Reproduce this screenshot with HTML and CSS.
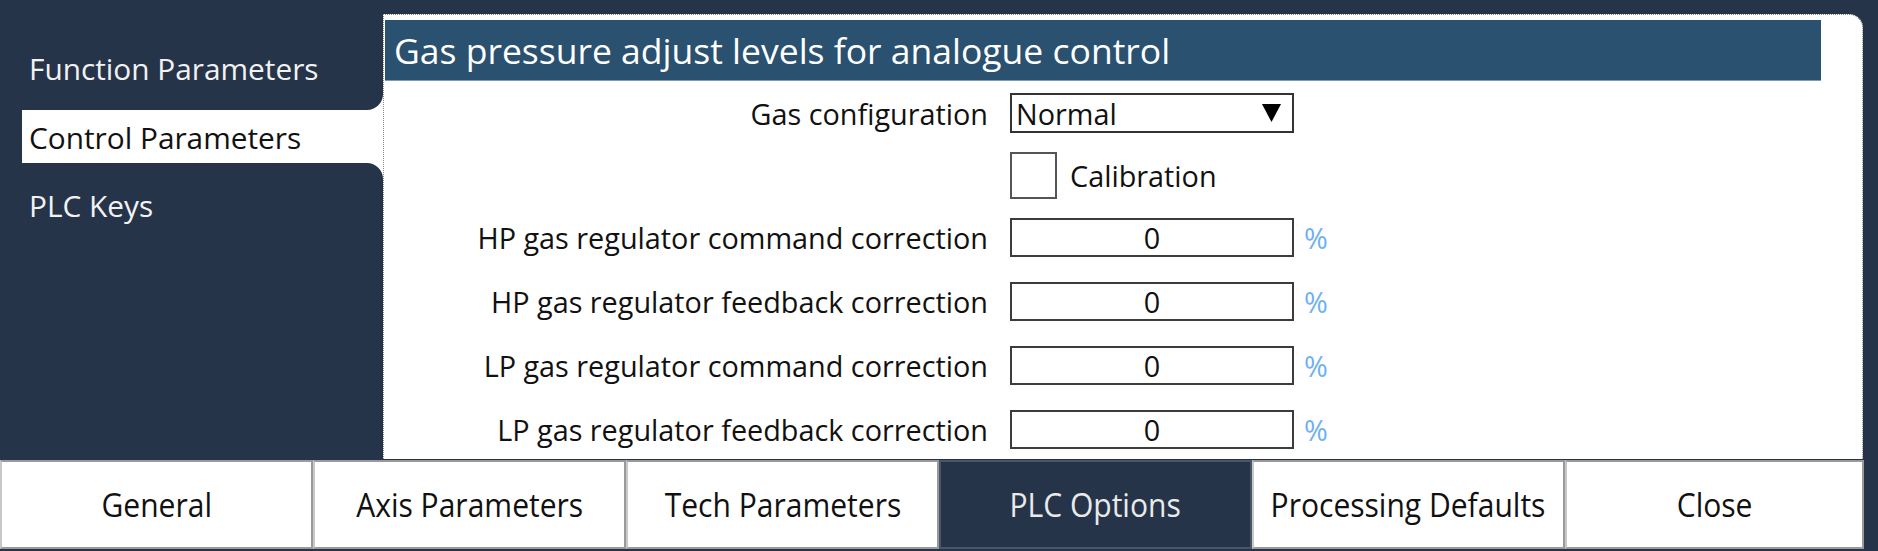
FILE: index.html
```html
<!DOCTYPE html>
<html lang="en">
<head>
<meta charset="utf-8">
<title>PLC Options</title>
<link rel="stylesheet" href="styles.css">
</head>
<body>
<div class="app">
  <div class="top">
    <nav class="side">
      <div class="slot"><div class="tab tab-first">Function Parameters</div></div>
      <div class="tab tab-active">Control Parameters</div>
      <div class="slot slot-fill"><div class="tab tab-last">PLC Keys</div></div>
    </nav>
    <section class="panel">
      <h1 class="panel-title">Gas pressure adjust levels for analogue control</h1>
      <div class="form">
        <div class="row row-select">
          <span class="lbl">Gas configuration</span>
          <div class="select"><span>Normal</span><svg class="caret" width="19" height="18" viewBox="0 0 19 18"><polygon points="0,0 19,0 9.5,18" fill="#000"/></svg></div>
        </div>
        <div class="row row-check">
          <span class="lbl"></span>
          <div class="check"><span class="box"></span><span class="check-text">Calibration</span></div>
        </div>
        <div class="row row-input">
          <span class="lbl">HP gas regulator command correction</span>
          <div class="input">0</div><span class="unit">%</span>
        </div>
        <div class="row row-input">
          <span class="lbl">HP gas regulator feedback correction</span>
          <div class="input">0</div><span class="unit">%</span>
        </div>
        <div class="row row-input">
          <span class="lbl">LP gas regulator command correction</span>
          <div class="input">0</div><span class="unit">%</span>
        </div>
        <div class="row row-input">
          <span class="lbl">LP gas regulator feedback correction</span>
          <div class="input">0</div><span class="unit">%</span>
        </div>
      </div>
    </section>
  </div>
  <div class="bar">
    <div class="btn"><span>General</span></div>
    <div class="btn"><span>Axis Parameters</span></div>
    <div class="btn"><span>Tech Parameters</span></div>
    <div class="btn btn-active"><span>PLC Options</span></div>
    <div class="btn"><span>Processing Defaults</span></div>
    <div class="btn btn-last"><span>Close</span></div>
  </div>
</div>
</body>
</html>
```

FILE: styles.css
```css
* { box-sizing: border-box; }
html, body {
  margin: 0;
  padding: 0;
  background: #263449;
  font-family: "Open Sans", "Noto Sans", sans-serif;
  color: #111;
}
.app {
  width: 1878px;
  height: 551px;
  display: flex;
  flex-direction: column;
}
.top {
  display: flex;
  height: 459px;
}
.side {
  width: 383px;
  display: flex;
  flex-direction: column;
}
.slot { background: #fff; }
.slot-fill { flex: 1; display: flex; flex-direction: column; }
.tab {
  font-size: 29.8px;
  line-height: 40px;
  padding-left: 29px;
  color: #f2f2f2;
  background: #263449;
  white-space: nowrap;
}
.tab-first {
  height: 110px;
  padding-top: 49px;
  border-bottom-right-radius: 16px;
}
.tab-active {
  height: 53px;
  margin-left: 22px;
  padding-left: 7px;
  padding-top: 8px;
  background: #fff;
  color: #111;
}
.tab-last {
  flex: 1;
  padding-top: 23px;
  border-top-right-radius: 16px;
}
.panel {
  margin-top: 14px;
  width: 1480px;
  background: #fff;
  border: 1px dotted #8a8a8a;
  border-bottom: none;
  border-top-right-radius: 14px;
  display: flex;
  flex-direction: column;
}
.panel-title {
  margin: 5px 41px 0 1px;
  height: 61px;
  background: #2a5170;
  border-bottom: 1px solid #7d9ab3;
  color: #fff;
  font-weight: 400;
  font-size: 35.5px;
  line-height: 60px;
  padding-left: 9px;
  white-space: nowrap;
}
.form {
  display: flex;
  flex-direction: column;
  padding-top: 12px;
}
.row {
  display: flex;
  align-items: center;
}
.row-select { height: 40px; }
.row-check { height: 47px; margin-top: 19px; }
.row-input { height: 39px; margin-top: 25px; }
.row-check + .row-input { margin-top: 19px; }
.lbl {
  width: 626px;
  padding-right: 22px;
  text-align: right;
  font-size: 28.8px;
  white-space: nowrap;
  flex: none;
}
.select {
  width: 284px;
  height: 40px;
  border: 2px solid #333;
  display: flex;
  align-items: center;
  justify-content: space-between;
  padding: 0 11px 0 4px;
  font-size: 28.8px;
}
.caret { display: block; }
.check {
  display: flex;
  align-items: center;
  gap: 13px;
  font-size: 28.8px;
}
.box {
  width: 47px;
  height: 47px;
  border: 2px solid #555;
  background: #fff;
}
.input {
  width: 284px;
  height: 39px;
  border: 2px solid #3c3c3c;
  text-align: center;
  font-size: 28.8px;
  line-height: 35px;
}
.unit {
  margin-left: 10px;
  color: #6fb1ee;
  font-size: 28.8px;
}
.bar {
  display: flex;
  padding: 1px 14px 2px 0;
  height: 92px;
}
.btn {
  width: 313px;
  flex: none;
  background: #fff;
  border: 2px solid #9a9a9a;
  border-left-color: #c8c8c8;
  display: flex;
  align-items: center;
  justify-content: center;
  font-size: 33px;
  color: #111;
}
.btn-last { flex: 1; width: auto; }
.btn span { display: inline-block; transform: scaleX(0.91); white-space: nowrap; }
.btn-active {
  background: #263449;
  color: #eaeaea;
  border-color: #4a5668;
}
```
